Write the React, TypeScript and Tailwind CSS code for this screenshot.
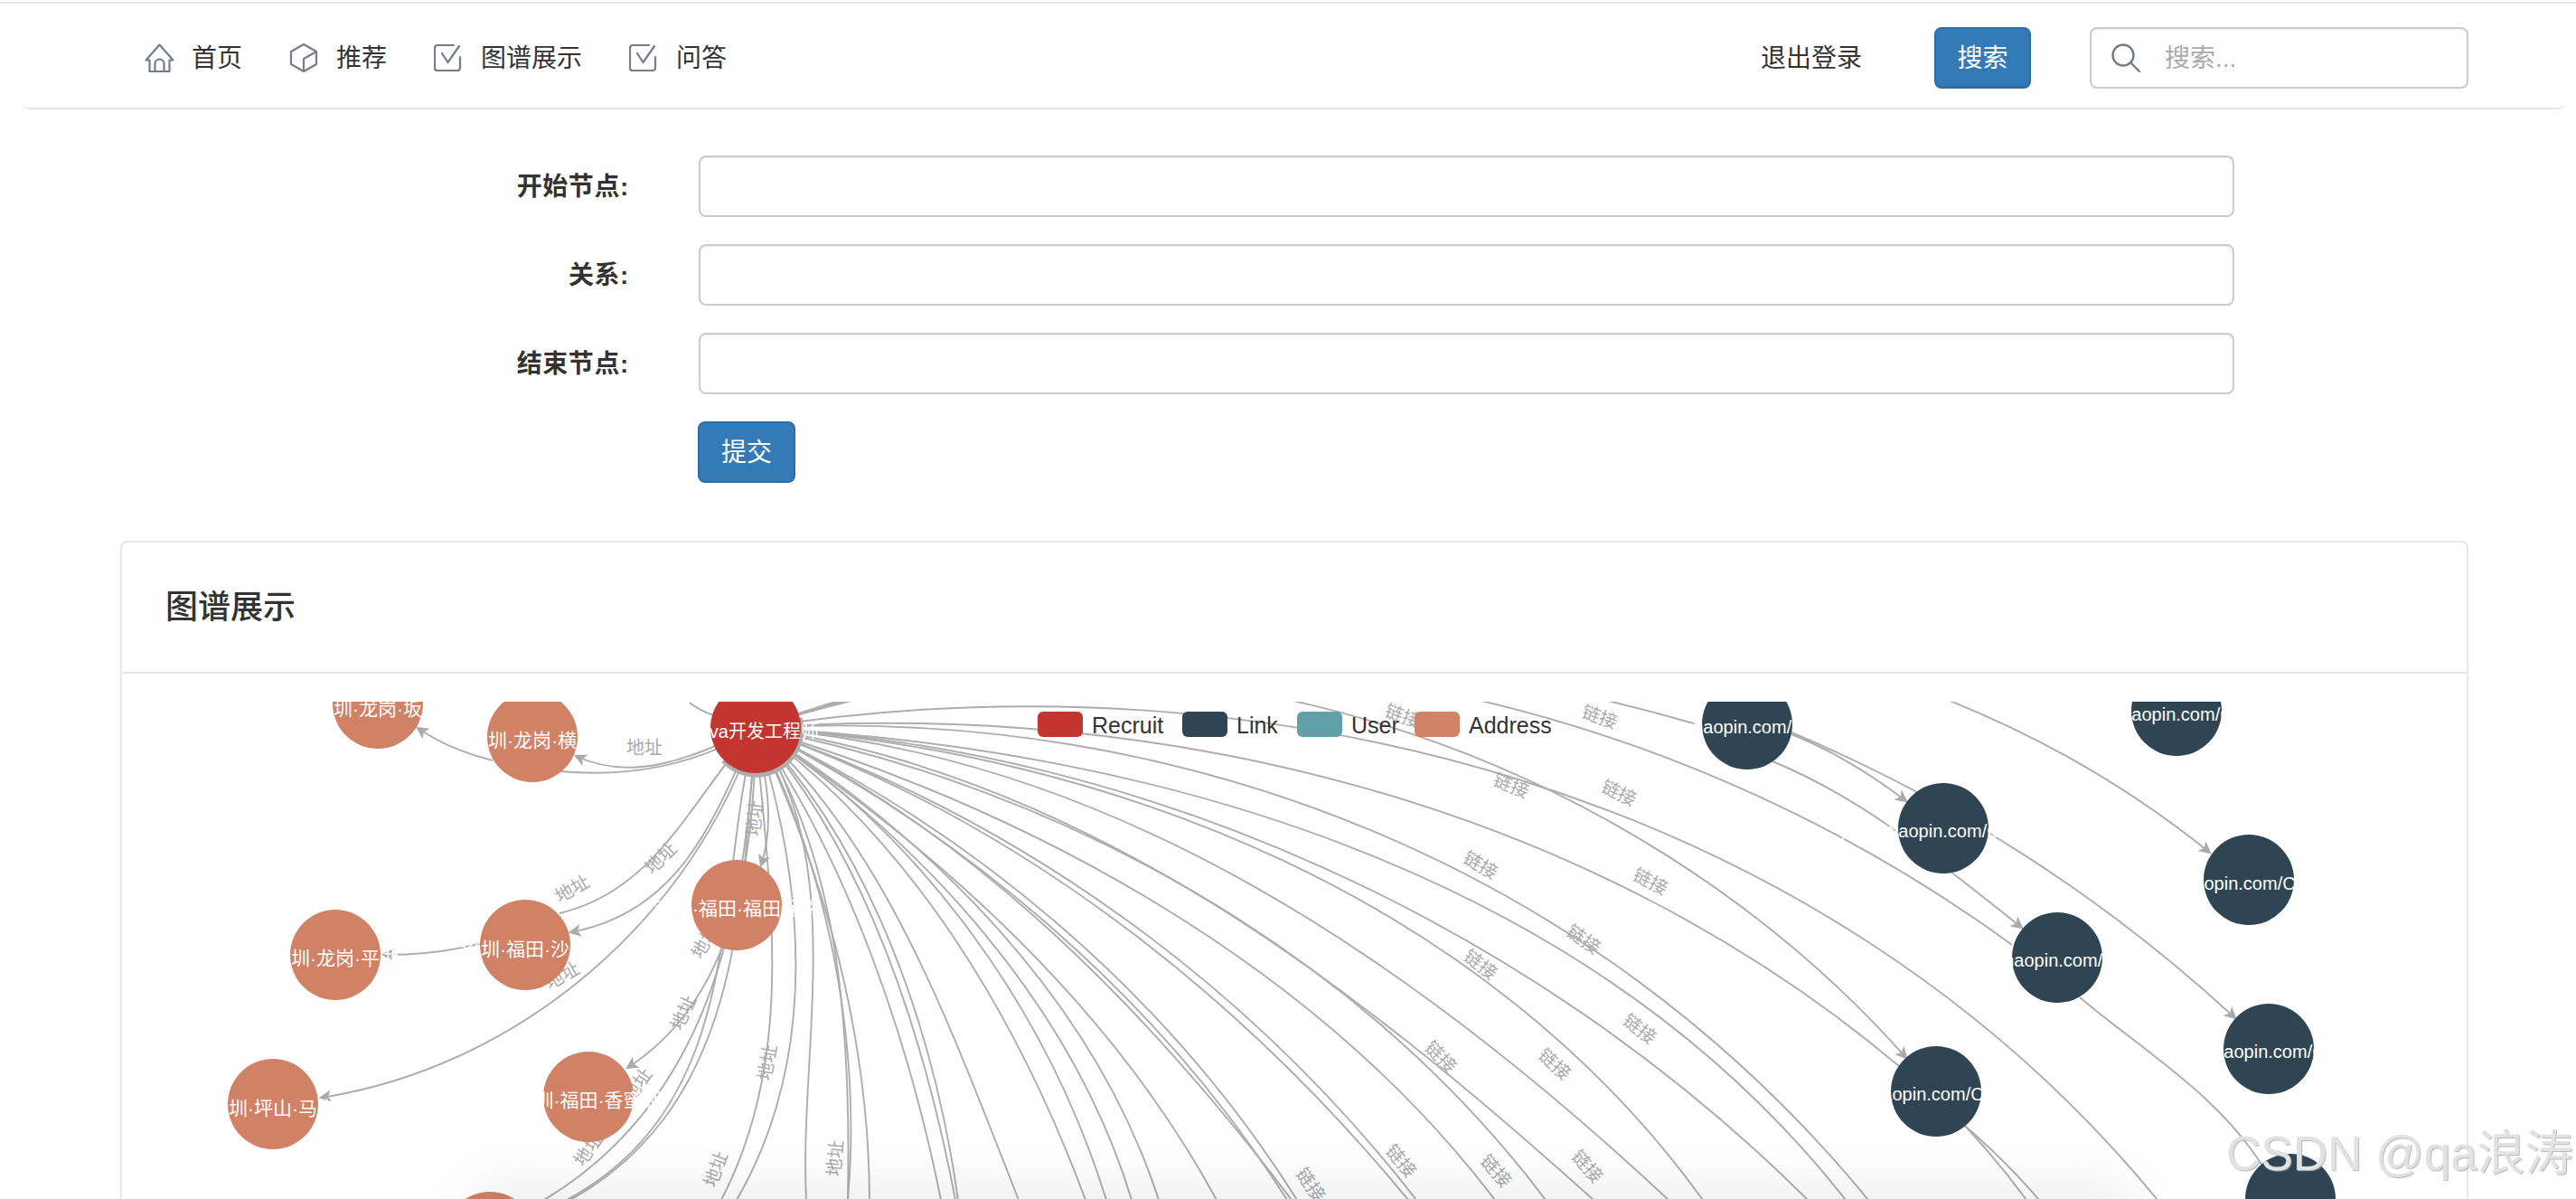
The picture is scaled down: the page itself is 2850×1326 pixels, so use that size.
const FONT = '"Liberation Sans","Noto Sans CJK SC",sans-serif';

type Point = [number, number];

const HUB: Point = [836, 804];

type Edge = { from?: Point; points: Point[]; arrow?: boolean };

const edges: Edge[] = [
  // right hand fan, top to bottom
  { points: [[1400, 730], [1815, 776], [1877, 800]] },
  { points: [[1200, 735], [1628, 776], [1800, 822], [1905, 855], [2017, 913], [2116, 976], [2226, 1044]] },
  { points: [[1500, 680], [2163, 776], [2276, 822], [2350, 878], [2445, 942]], arrow: true },
  { points: [[1100, 745], [1409, 776], [1567, 811], [1665, 853], [1774, 906], [1850, 948], [1923, 993], [2045, 1099], [2109, 1169]], arrow: true },
  { points: [[1060, 781], [1201, 785], [1300, 800], [1440, 806], [1567, 816], [1665, 851], [1756, 895], [1800, 900], [2010, 1007], [2151, 1099], [2256, 1193], [2350, 1281], [2387, 1326]] },
  { points: [[889, 800], [1060, 800], [1201, 813], [1300, 823], [1405, 843], [1545, 879], [1686, 934], [1800, 983], [1940, 1057], [2101, 1178]] },
  { points: [[889, 806], [1060, 815], [1201, 836], [1300, 846], [1440, 878], [1581, 930], [1721, 1014], [1800, 1085], [1905, 1172], [1996, 1267], [2067, 1326]] },
  { points: [[889, 812], [1060, 836], [1201, 848], [1300, 865], [1440, 909], [1616, 997], [1735, 1067], [1800, 1092], [1905, 1172], [1975, 1246], [2042, 1326]] },
  { points: [[1300, 897], [1475, 965], [1651, 1060], [1800, 1151], [1905, 1232], [2000, 1326]] },
  { points: [[1300, 908], [1475, 976], [1616, 1057], [1721, 1148], [1800, 1232], [1884, 1326]] },
  { points: [[1300, 937], [1440, 1004], [1581, 1102], [1710, 1214], [1846, 1326]] },
  { points: [[1300, 976], [1405, 1035], [1563, 1151], [1668, 1253], [1763, 1326]] },
  { points: [[1300, 976], [1405, 1043], [1581, 1172], [1651, 1256], [1710, 1326]] },
  { points: [[1300, 1018], [1440, 1113], [1545, 1197], [1598, 1249], [1654, 1326]] },
  { points: [[1300, 1062], [1405, 1144], [1510, 1256], [1567, 1326]] },
  { points: [[1300, 1072], [1440, 1193], [1510, 1267], [1558, 1326]] },
  { points: [[1300, 1148], [1370, 1232], [1435, 1326]] },
  { points: [[1300, 1164], [1370, 1243], [1424, 1326]] },
  { points: [[1300, 1169], [1370, 1250], [1429, 1326]] },
  { points: [[1300, 1249], [1346, 1326]] },
  // fan going down
  { points: [[885, 832], [1096, 1021], [1218, 1179], [1282, 1326]] },
  { points: [[885, 836], [1078, 1021], [1201, 1197], [1252, 1326]] },
  { points: [[889, 839], [1061, 1015], [1166, 1179], [1224, 1326]] },
  { points: [[885, 839], [1043, 1021], [1148, 1197], [1201, 1326]] },
  { points: [[885, 843], [1008, 1057], [1089, 1214], [1127, 1326]] },
  { points: [[880, 846], [985, 1057], [1040, 1197], [1060, 1326]] },
  { points: [[878, 846], [976, 1057], [1033, 1197], [1057, 1326]] },
  { points: [[875, 846], [955, 1057], [1018, 1197], [1041, 1326]] },
  { points: [[861, 857], [934, 1092], [955, 1197], [962, 1326]] },
  { points: [[871, 857], [920, 1057], [941, 1197], [938, 1326]] },
  { points: [[868, 857], [916, 1057], [945, 1197], [938, 1326]] },
  { points: [[868, 856], [896, 1092], [897, 1197], [892, 1326]] },
  { points: [[852, 856], [878, 1021], [878, 1127], [815, 1326]] },
  { points: [[838, 856], [854, 1050], [857, 1092], [840, 1197], [798, 1326]] },
  { points: [[846, 856], [850, 900], [842, 956]], arrow: true },
  { points: [[826, 856], [806, 1049], [751, 1166], [602, 1326]] },
  { points: [[822, 856], [800, 1049], [760, 1180], [627, 1326]] },
  { points: [[830, 856], [812, 1049], [768, 1180], [631, 1326]] },
  // left side of the hub
  { points: [[797, 1049], [760, 1120], [694, 1180]], arrow: true },
  { points: [[789, 825], [711, 847], [637, 835]], arrow: true },
  { points: [[789, 829], [694, 852], [619, 852]] },
  { from: [545, 840], points: [[500, 825], [462, 804]], arrow: true },
  { points: [[802, 845], [720, 950], [619, 1009]] },
  { points: [[815, 850], [768, 938], [631, 1030]], arrow: true },
  { from: [533, 1042], points: [[480, 1052], [424, 1055]], arrow: true },
  { points: [[817, 854], [746, 975], [608, 1109], [355, 1213]], arrow: true },
  { points: [[789, 790], [763, 776]] },
  // between the link nodes
  { from: [1982, 811], points: [[2045, 842], [2109, 885]], arrow: true },
  { from: [1982, 809], points: [[2050, 838], [2119, 874], [2200, 921], [2350, 1021], [2473, 1125]], arrow: true },
  { from: [1961, 841], points: [[2095, 916], [2161, 965], [2237, 1025]], arrow: true },
  { from: [2301, 1102], points: [[2350, 1141], [2430, 1205], [2506, 1293]] },
  { from: [2174, 1244], points: [[2210, 1285], [2242, 1326]] },
  { from: [2174, 1244], points: [[2218, 1285], [2256, 1326]] },
];

const edgeLabels: { text: string; x: number; y: number; rotate: number }[] = [
  { text: '链接', x: 1552, y: 791, rotate: 20 },
  { text: '链接', x: 1770, y: 792, rotate: 20 },
  { text: '链接', x: 1672, y: 868, rotate: 22 },
  { text: '链接', x: 1791, y: 876, rotate: 25 },
  { text: '链接', x: 1638, y: 956, rotate: 30 },
  { text: '链接', x: 1826, y: 974, rotate: 27 },
  { text: '链接', x: 1752, y: 1038, rotate: 35 },
  { text: '链接', x: 1638, y: 1066, rotate: 37 },
  { text: '链接', x: 1814, y: 1137, rotate: 38 },
  { text: '链接', x: 1594, y: 1168, rotate: 45 },
  { text: '链接', x: 1720, y: 1176, rotate: 42 },
  { text: '链接', x: 1550, y: 1283, rotate: 50 },
  { text: '链接', x: 1655, y: 1294, rotate: 48 },
  { text: '链接', x: 1756, y: 1289, rotate: 48 },
  { text: '链接', x: 1450, y: 1309, rotate: 55 },
  { text: '地址', x: 713, y: 826, rotate: 0 },
  { text: '地址', x: 633, y: 982, rotate: -30 },
  { text: '地址', x: 731, y: 948, rotate: -45 },
  { text: '地址', x: 835, y: 904, rotate: -85 },
  { text: '地址', x: 622, y: 1078, rotate: -30 },
  { text: '地址', x: 756, y: 1119, rotate: -65 },
  { text: '地址', x: 849, y: 1174, rotate: -80 },
  { text: '地址', x: 705, y: 1199, rotate: -55 },
  { text: '地址', x: 651, y: 1270, rotate: -55 },
  { text: '地址', x: 792, y: 1292, rotate: -70 },
  { text: '地址', x: 924, y: 1280, rotate: -85 },
  { text: '地址', x: 780, y: 1040, rotate: -60 },
];

const addressNodes: { x: number; y: number; label?: string; labelY?: number }[] = [
  { x: 418, y: 777, label: '深圳·龙岗·坂田', labelY: 782 },
  { x: 589, y: 814, label: '深圳·龙岗·横岗', labelY: 817 },
  { x: 815, y: 1000, label: '深圳·福田·福田保税', labelY: 1003 },
  { x: 581, y: 1044, label: '深圳·福田·沙头', labelY: 1048 },
  { x: 371, y: 1055, label: '深圳·龙岗·平湖', labelY: 1058 },
  { x: 302, y: 1220, label: '深圳·坪山·马峦', labelY: 1224 },
  { x: 651, y: 1212, label: '深圳·福田·香蜜湖', labelY: 1215 },
  { x: 542, y: 1367 },
];

const linkNodes: { x: number; y: number; textX: number; textY: number }[] = [
  { x: 1933, y: 800, textX: 1884, textY: 803 },
  { x: 2150, y: 915, textX: 2100, textY: 918 },
  { x: 2408, y: 785, textX: 2358, textY: 789 },
  { x: 2488, y: 972, textX: 2427, textY: 976 },
  { x: 2276, y: 1058, textX: 2228, textY: 1061 },
  { x: 2510, y: 1159, textX: 2460, textY: 1162 },
  { x: 2142, y: 1206, textX: 2082, textY: 1209 },
  { x: 2534, y: 1325, textX: 2479, textY: 1336 },
];

const legend = [
  { label: 'Recruit', color: '#c23531', x: 1148 },
  { label: 'Link', color: '#2f4554', x: 1308 },
  { label: 'User', color: '#61a0a8', x: 1435 },
  { label: 'Address', color: '#d48265', x: 1565 },
];

// one cubic fitted to the traced points, so long edges stay smooth
function fitCubic(points: Point[]) {
  const first = points[0];
  const last = points[points.length - 1];
  if (points.length === 2) {
    return `M${first[0]} ${first[1]}L${last[0]} ${last[1]}`;
  }
  if (points.length === 3) {
    const cx = 2 * points[1][0] - (first[0] + last[0]) / 2;
    const cy = 2 * points[1][1] - (first[1] + last[1]) / 2;
    return `M${first[0]} ${first[1]}Q${cx} ${cy} ${last[0]} ${last[1]}`;
  }

  const lengths = [0];
  for (let i = 1; i < points.length; i++) {
    lengths.push(
      lengths[i - 1] +
        Math.hypot(points[i][0] - points[i - 1][0], points[i][1] - points[i - 1][1]),
    );
  }
  const total = lengths[lengths.length - 1];

  let a11 = 0;
  let a12 = 0;
  let a22 = 0;
  const b1: Point = [0, 0];
  const b2: Point = [0, 0];
  points.forEach((point, i) => {
    const t = lengths[i] / total;
    const u = 1 - t;
    const w1 = 3 * u * u * t;
    const w2 = 3 * u * t * t;
    a11 += w1 * w1;
    a12 += w1 * w2;
    a22 += w2 * w2;
    for (const axis of [0, 1]) {
      const rest = point[axis] - u * u * u * first[axis] - t * t * t * last[axis];
      b1[axis] += w1 * rest;
      b2[axis] += w2 * rest;
    }
  });
  const det = a11 * a22 - a12 * a12;
  const c1x = (a22 * b1[0] - a12 * b2[0]) / det;
  const c1y = (a22 * b1[1] - a12 * b2[1]) / det;
  const c2x = (a11 * b2[0] - a12 * b1[0]) / det;
  const c2y = (a11 * b2[1] - a12 * b1[1]) / det;
  return `M${first[0]} ${first[1]}C${c1x.toFixed(1)} ${c1y.toFixed(1)} ${c2x.toFixed(1)} ${c2y.toFixed(1)} ${last[0]} ${last[1]}`;
}

function edgePath(edge: Edge) {
  const start = edge.from ?? HUB;
  const first = edge.points[0];
  const dx = first[0] - start[0];
  const dy = first[1] - start[1];
  const route: Point[] = [start];
  // long first legs leave the hub with a slight bow
  if (!edge.from && Math.hypot(dx, dy) > 200) {
    route.push([start[0] + dx / 2 + dy * 0.05, start[1] + dy / 2 - dx * 0.05]);
  }
  return fitCubic([...route, ...edge.points]);
}

function GraphChart() {
  return (
    <svg
      viewBox="135 775 2594 600"
      className="block h-[600px] w-[2594px]"
      style={{ fontFamily: FONT }}
    >
      <defs>
        <marker
          id="arrow"
          viewBox="0 0 12 12"
          refX="10"
          refY="6"
          markerWidth="14"
          markerHeight="14"
          markerUnits="userSpaceOnUse"
          orient="auto"
        >
          <path d="M0 0L12 6L0 12L3 6Z" fill="#aaaaaa" />
        </marker>
      </defs>

      {edges.map((edge, i) => (
        <path
          key={i}
          d={edgePath(edge)}
          fill="none"
          stroke="#adadad"
          strokeWidth="1.9"
          markerEnd={edge.arrow ? 'url(#arrow)' : undefined}
        />
      ))}

      {edgeLabels.map((label, i) => (
        <text
          key={i}
          x={label.x}
          y={label.y}
          fontSize="20"
          fill="#aaaaaa"
          textAnchor="middle"
          dominantBaseline="central"
          transform={`rotate(${label.rotate} ${label.x} ${label.y})`}
        >
          {label.text}
        </text>
      ))}

      <path
        d="M885 793A50 50 0 0 1 800 840"
        fill="none"
        stroke="#adadad"
        strokeWidth="5"
      />
      <circle cx={HUB[0]} cy={HUB[1]} r="50" fill="#c23531" />
      <text
        x="906"
        y="808"
        fontSize="20"
        fill="#ffffff"
        textAnchor="end"
        dominantBaseline="central"
      >
        Java开发工程师
      </text>

      {addressNodes.map((node, i) => (
        <g key={i}>
          <circle cx={node.x} cy={node.y} r="50" fill="#d08166" />
          {node.label && (
            <text
              x={node.x}
              y={node.labelY}
              fontSize="21"
              fill="#ffffff"
              textAnchor="middle"
              dominantBaseline="central"
            >
              {node.label}
            </text>
          )}
        </g>
      ))}

      {linkNodes.map((node, i) => (
        <g key={i}>
          <circle cx={node.x} cy={node.y} r="50" fill="#2f4554" />
          <text
            x={node.textX - 63}
            y={node.textY}
            fontSize="20"
            fill="#ffffff"
            dominantBaseline="central"
          >
            jobs.zhaopin.com/CC41
          </text>
        </g>
      ))}

      {legend.map((item) => (
        <g key={item.label}>
          <rect
            x={item.x}
            y="786"
            width="50"
            height="28"
            rx="6"
            fill={item.color}
          />
          <text
            x={item.x + 60}
            y="801"
            fontSize="25"
            fill="#333333"
            dominantBaseline="central"
          >
            {item.label}
          </text>
        </g>
      ))}
    </svg>
  );
}

function HomeIcon() {
  return (
    <svg viewBox="0 0 33 32" className="h-[32px] w-[33px]" fill="none" stroke="#767c8e" strokeWidth="2.2" strokeLinejoin="round">
      <path d="M16.5 1.5L1.5 18.5H5.5V31H27.5V18.5H31.5Z" />
      <path d="M11.5 31V22.5A5 5 0 0 1 21.5 22.5V31" />
    </svg>
  );
}

function BoxIcon() {
  return (
    <svg viewBox="0 0 32 32" className="h-[32px] w-[32px]" fill="none" stroke="#767c8e" strokeWidth="2.2" strokeLinejoin="round">
      <path d="M16 1L30 9V23L16 31L2 23V9Z" />
      <path d="M30 9L16 17V31" />
    </svg>
  );
}

function CheckIcon() {
  return (
    <svg viewBox="0 0 32 32" className="h-[32px] w-[32px]" fill="none" stroke="#767c8e" strokeWidth="2.2" strokeLinecap="round" strokeLinejoin="round">
      <path d="M22 2H4A3 3 0 0 0 1 5V27A3 3 0 0 0 4 30H26A3 3 0 0 0 29 27V15" />
      <path d="M9 11L15.5 21L28 3" />
    </svg>
  );
}

function SearchIcon() {
  return (
    <svg viewBox="0 0 32 32" className="h-[32px] w-[32px]" fill="none" stroke="#767c8e" strokeWidth="2.4" strokeLinecap="round">
      <circle cx="13" cy="13" r="11.5" />
      <path d="M21 21L31 31" />
    </svg>
  );
}

const navItems = [
  { label: '首页', icon: <HomeIcon />, gap: 'gap-[19px]' },
  { label: '推荐', icon: <BoxIcon />, gap: 'gap-[20px]' },
  { label: '图谱展示', icon: <CheckIcon />, gap: 'gap-[20px]' },
  { label: '问答', icon: <CheckIcon />, gap: 'gap-[20px]' },
];

const formRows = ['开始节点:', '关系:', '结束节点:'];

export default function App() {
  return (
    <div
      className="relative h-[1326px] w-[2850px] overflow-hidden bg-white pt-[2px] text-[28px] text-[#333]"
      style={{ fontFamily: FONT }}
    >
      <div className="border-t-2 border-[#e7e7e7]">
        <nav className="ml-[25px] mr-[12px] flex h-[117px] items-center rounded-b-lg border-b-2 border-[#e7e7e7] pt-[5px] pl-[135px] pr-[107px]">
          <ul className="flex gap-[52px]">
            {navItems.map((item) => (
              <li key={item.label} className={`flex items-center leading-none ${item.gap}`}>
                {item.icon}
                <span className="pt-[2px]">{item.label}</span>
              </li>
            ))}
          </ul>
          <div className="ml-auto flex items-center">
            <span className="mr-[80px] pt-[2px]">退出登录</span>
            <button className="mr-[65px] h-[68px] w-[107px] rounded-lg border-2 border-b-[3px] border-[#2e6da4] bg-[#337ab7] pt-[2px] text-white">
              搜索
            </button>
            <div className="flex h-[68px] w-[419px] items-center gap-[27px] rounded-lg border-2 border-[#ccc] pl-[22px] shadow-[inset_0_1px_1px_rgba(0,0,0,0.08)]">
              <SearchIcon />
              <span className="pt-[2px] text-[#aaa]">搜索...</span>
            </div>
          </div>
        </nav>
      </div>

      <form className="mt-[51px] flex flex-col gap-[30px]">
        {formRows.map((label) => (
          <div key={label} className="flex items-center gap-[77px]">
            <label className="w-[696px] pt-[2px] text-right font-bold tracking-[0.6px]">{label}</label>
            <input className="h-[68px] w-[1699px] rounded-lg border-2 border-[#ccc] bg-white shadow-[inset_0_1px_1px_rgba(0,0,0,0.08)]" />
          </div>
        ))}
        <div className="pl-[772px]">
          <button
            type="button"
            className="h-[68px] w-[108px] rounded-lg border-2 border-[#2e6da4] bg-[#337ab7] pt-[2px] text-white"
          >
            提交
          </button>
        </div>
      </form>

      <section className="ml-[133px] mt-[64px] w-[2598px] rounded-lg border-2 border-[#e7e7e7]">
        <header className="flex h-[145px] items-center border-b-2 border-[#e7e7e7] pl-[48px]">
          <h2 className="text-[36px] font-medium leading-none">图谱展示</h2>
        </header>
        <div className="pt-[31px]">
          <GraphChart />
        </div>
      </section>

      <div className="absolute left-[560px] top-[1350px] h-[30px] w-[1760px] bg-[#ddd] shadow-[0_0_60px_40px_rgba(0,0,0,0.07)]" />
      <div className="absolute left-[2463px] top-[1244px] text-[53px] leading-[64px] text-[#e2e2e2] [text-shadow:1px_1px_1px_#b5b5b5]">
        CSDN @qa浪涛
      </div>
    </div>
  );
}
